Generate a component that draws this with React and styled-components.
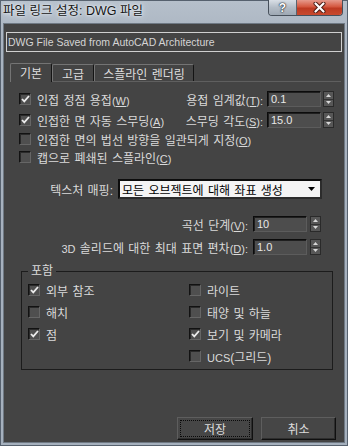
import React from "react";
import styled, { createGlobalStyle } from "styled-components";

const FONT = `"Liberation Sans", "Noto Sans CJK KR", sans-serif`;

const Global = createGlobalStyle`
  html, body { margin: 0; padding: 0; }
  body { background: #a9b3bf; font-family: ${FONT}; }
  #root { width: 348px; height: 446px; }
`;

const Window = styled.div`
  width: 348px;
  height: 446px;
  box-sizing: border-box;
  display: flex;
  flex-direction: column;
  background: linear-gradient(to bottom, #b6c0cb 0px, #a9b3c0 40px, #a5b0bd 100%);
  box-shadow: inset 0 0 0 1px #56616e;
  overflow: hidden;
`;

const TitleBar = styled.div`
  height: 23px;
  flex: none;
  display: flex;
  align-items: flex-start;
  padding-left: 3px;
`;

const Title = styled.div`
  margin-top: 3px;
  font-size: 12.5px;
  line-height: 16px;
  color: #141414;
  white-space: nowrap;
  text-shadow: 0 0 4px #e6ecf2, 0 0 8px #dde5ee, 0 0 2px #eef2f6;
`;

const Caption = styled.div`
  margin-left: auto;
  margin-right: 5px;
  display: flex;
  height: 15px;
  border: 1px solid #47505b;
  border-top: none;
  border-radius: 0 0 4px 4px;
  overflow: hidden;
`;

const HelpBtn = styled.div`
  width: 27px;
  display: flex;
  align-items: center;
  justify-content: center;
  background: linear-gradient(to bottom, #d9dfe6, #b3bcc6 50%, #9ea8b3);
  border-right: 1px solid #5a646f;
  font: bold 12px "Liberation Sans", sans-serif;
  color: #ffffff;
  text-shadow: 0 0 1px #2a3038, 0 0 1px #2a3038, 0 0 2px #2a3038;
`;

const CloseBtn = styled.div`
  width: 45px;
  display: flex;
  align-items: center;
  justify-content: center;
  background: linear-gradient(to bottom, #e69a8c, #d4573f 45%, #bd3a22 55%, #c84a2e);
`;

const Client = styled.div`
  flex: 1;
  margin: 0 3px 3px;
  min-height: 0;
  box-sizing: border-box;
  background: #444444;
  border: 1px solid #6f7984;
  display: flex;
  flex-direction: column;
  color: #dadada;
  font-size: 12px;
  word-spacing: 1px;
`;

const DescBox = styled.div`
  margin: 8px 2px 0;
  height: 20px;
  box-sizing: border-box;
  border: 1px solid #d0d0d0;
  font: 10.5px/18px "Liberation Sans", sans-serif;
  word-spacing: 0;
  color: #d4d4d4;
  padding-left: 1px;
  white-space: nowrap;
`;

const TabStrip = styled.div`
  margin: 10px 3px 0 6px;
  height: 19px;
  display: flex;
  align-items: flex-end;
  border-bottom: 1px solid #5f5f5f;
`;

const Tab = styled.div`
  box-sizing: border-box;
  width: ${(p) => p.$w}px;
  height: ${(p) => (p.$active ? 19 : 17)}px;
  margin-bottom: ${(p) => (p.$active ? -1 : 0)}px;
  background: #444444;
  border-left: 1px solid #747474;
  border-top: 1px solid #747474;
  border-right: 1px solid #141414;
  border-radius: 2px 2px 0 0;
  display: flex;
  align-items: center;
  justify-content: center;
  font-size: 12px;
  color: #dedede;
  white-space: nowrap;
  padding-bottom: ${(p) => (p.$active ? 1 : 0)}px;
`;

const Panel = styled.div`
  flex: 1;
  display: flex;
  flex-direction: column;
`;

const OptionRow = styled.div`
  height: 18px;
  margin-top: ${(p) => p.$mt}px;
  padding: 0 10px 0 15px;
  display: flex;
  align-items: center;
`;

const CheckLabel = styled.label`
  display: flex;
  align-items: center;
  gap: 6px;
  white-space: nowrap;
`;

const Box = styled.span`
  width: 12px;
  height: 12px;
  box-sizing: border-box;
  flex: none;
  background: #4f4f4f;
  border: 1px solid;
  border-color: #121212 #666666 #666666 #121212;
  box-shadow: inset 1px 1px 0 #2a2a2a;
  display: flex;
  align-items: center;
  justify-content: center;
`;

const Mn = styled.span`
  font-family: "Liberation Sans", sans-serif;
  font-size: 11px;
  word-spacing: 0;
  & u { text-decoration-thickness: 1px; text-underline-offset: 1px; }
`;

const SpinGroup = styled.div`
  margin-left: auto;
  display: flex;
  align-items: center;
`;

const SpinLabel = styled.span`
  white-space: nowrap;
  margin-right: ${(p) => p.$gap}px;
`;

const Field = styled.div`
  width: 54px;
  height: 16px;
  box-sizing: border-box;
  background: #4d4d4d;
  border: 1px solid;
  border-color: #0c0c0c #5c5c5c #5c5c5c #0c0c0c;
  box-shadow: inset 1px 1px 0 #1f1f1f;
  font: 11px/14px "Liberation Sans", sans-serif;
  color: #e8e8e8;
  padding-left: 3px;
`;

const Arrows = styled.div`
  width: 11px;
  height: 16px;
  box-sizing: border-box;
  margin-left: ${(p) => p.$gap}px;
  border: 1px solid #2a2a2a;
  background: #575757;
  display: flex;
  flex-direction: column;
`;

const ArrowHalf = styled.div`
  flex: 1;
  display: flex;
  align-items: center;
  justify-content: center;
  border-top: ${(p) => (p.$down ? "1px solid #333" : "none")};
`;

const TextureRow = styled.div`
  margin-top: 13px;
  padding-right: 22px;
  display: flex;
  justify-content: flex-end;
  align-items: center;
`;

const Select = styled.div`
  width: 204px;
  height: 20px;
  box-sizing: border-box;
  border: 2px solid;
  border-color: #0c0c0c #2c2c2c #2c2c2c #0c0c0c;
  background: #f4f4f4;
  color: #000;
  font-size: 12px;
  display: flex;
  align-items: center;
  padding: 0 5px 0 2px;
  white-space: nowrap;
  margin-left: 5px;
`;

const SelectArrow = styled.svg`
  margin-left: auto;
  flex: none;
`;

const CurveRow = styled.div`
  height: 18px;
  margin-top: ${(p) => p.$mt}px;
  padding-right: 23px;
  display: flex;
  justify-content: flex-end;
  align-items: center;
`;

const Group = styled.div`
  position: relative;
  margin: 15px 11px 0 17px;
  border: 1px solid #1c1c1c;
  padding: 7px 0 2px 6px;
  display: grid;
  grid-template-columns: 161px 1fr;
  grid-auto-rows: 22px;
  align-items: center;
`;

const Legend = styled.span`
  position: absolute;
  top: -10px;
  left: 6px;
  padding: 0 3px;
  background: #444444;
  font-size: 12px;
  line-height: 18px;
`;

const ButtonRow = styled.div`
  margin-top: auto;
  padding: 0 8px 2px 0;
  display: flex;
  justify-content: flex-end;
  gap: 8px;
`;

const Button = styled.div`
  width: ${(p) => p.$w}px;
  height: 23px;
  box-sizing: border-box;
  background: #464646;
  border: 1px solid;
  border-color: #5e5e5e #101010 #101010 #5e5e5e;
  box-shadow: inset -1px -1px 0 #2e2e2e;
  display: flex;
  align-items: center;
  justify-content: center;
  font-size: 12px;
  color: #dcdcdc;
  outline: ${(p) => (p.$focus ? "1px dotted #0a0a0a" : "none")};
  outline-offset: -4px;
`;

const CheckMark = () => (
  <svg width="9" height="8" viewBox="0 0 9 8">
    <path d="M1 4 L3.3 6.4 L8 1" fill="none" stroke="#ececec" strokeWidth="1.8" />
  </svg>
);

const Check = ({ checked, children }) => (
  <CheckLabel>
    <Box>{checked && <CheckMark />}</Box>
    <span>{children}</span>
  </CheckLabel>
);

const Spinner = ({ value, gap }) => (
  <>
    <Field>{value}</Field>
    <Arrows $gap={gap}>
      <ArrowHalf>
        <svg width="5" height="3" viewBox="0 0 5 3">
          <path d="M0 3 L2.5 0 L5 3 Z" fill="#d8d8d8" />
        </svg>
      </ArrowHalf>
      <ArrowHalf $down>
        <svg width="5" height="3" viewBox="0 0 5 3">
          <path d="M0 0 L2.5 3 L5 0 Z" fill="#d8d8d8" />
        </svg>
      </ArrowHalf>
    </Arrows>
  </>
);

const K = ({ k, rest = "" }) => (
  <Mn>
    (<u>{k}</u>){rest}
  </Mn>
);

const groupItems = [
  [{ t: "외부 참조", c: true }, { t: "라이트", c: false }],
  [{ t: "해치", c: false }, { t: "태양 및 하늘", c: false }],
  [{ t: "점", c: true }, { t: "보기 및 카메라", c: true }],
  [null, { t: <><Mn>UCS</Mn>(그리드)</>, c: false }],
];

export default function App() {
  return (
    <>
      <Global />
      <Window>
        <TitleBar>
          <Title>파일 링크 설정: DWG 파일</Title>
          <Caption>
            <HelpBtn>?</HelpBtn>
            <CloseBtn>
              <svg width="13" height="11" viewBox="0 0 13 11">
                <path d="M2.5 1.5 L10.5 9.5 M10.5 1.5 L2.5 9.5" stroke="#4a1a12" strokeWidth="4" strokeLinecap="round" />
                <path d="M2.5 1.5 L10.5 9.5 M10.5 1.5 L2.5 9.5" stroke="#ffffff" strokeWidth="2.2" strokeLinecap="round" />
              </svg>
            </CloseBtn>
          </Caption>
        </TitleBar>
        <Client>
          <DescBox>DWG File Saved from AutoCAD Architecture</DescBox>
          <TabStrip>
            <Tab $active $w={42}>기본</Tab>
            <Tab $w={42}>고급</Tab>
            <Tab $w={100}>스플라인 렌더링</Tab>
          </TabStrip>
          <Panel>
            <OptionRow $mt={8}>
              <Check checked>
                인접 정점 용접<K k="W" />
              </Check>
              <SpinGroup>
                <SpinLabel $gap={4}>
                  용접 임계값<K k="T" rest=":" />
                </SpinLabel>
                <Spinner value="0.1" gap={2} />
              </SpinGroup>
            </OptionRow>
            <OptionRow $mt={3}>
              <Check checked>
                인접한 면 자동 스무딩<K k="A" />
              </Check>
              <SpinGroup>
                <SpinLabel $gap={4}>
                  스무딩 각도<K k="S" rest=":" />
                </SpinLabel>
                <Spinner value="15.0" gap={2} />
              </SpinGroup>
            </OptionRow>
            <OptionRow $mt={1}>
              <Check>
                인접한 면의 법선 방향을 일관되게 지정<K k="O" />
              </Check>
            </OptionRow>
            <OptionRow $mt={0}>
              <Check>
                캡으로 폐쇄된 스플라인<K k="C" />
              </Check>
            </OptionRow>

            <TextureRow>
              <span>텍스처 매핑:</span>
              <Select>
                모든 오브젝트에 대해 좌표 생성
                <SelectArrow width="7" height="4" viewBox="0 0 7 4">
                  <path d="M0 0 L7 0 L3.5 4 Z" fill="#000" />
                </SelectArrow>
              </Select>
            </TextureRow>

            <CurveRow $mt={16}>
              <SpinLabel $gap={5}>
                곡선 단계<K k="V" rest=":" />
              </SpinLabel>
              <Spinner value="10" gap={3} />
            </CurveRow>
            <CurveRow $mt={5}>
              <SpinLabel $gap={5}>
                <Mn>3D</Mn> 솔리드에 대한 최대 표면 편차<K k="D" rest=":" />
              </SpinLabel>
              <Spinner value="1.0" gap={3} />
            </CurveRow>

            <Group>
              <Legend>포함</Legend>
              {groupItems.flatMap((row, i) =>
                row.map((it, j) =>
                  it ? (
                    <Check key={`${i}-${j}`} checked={it.c}>
                      {it.t}
                    </Check>
                  ) : (
                    <span key={`${i}-${j}`} />
                  )
                )
              )}
            </Group>

            <ButtonRow>
              <Button $w={76} $focus>저장</Button>
              <Button $w={75}>취소</Button>
            </ButtonRow>
          </Panel>
        </Client>
      </Window>
    </>
  );
}
